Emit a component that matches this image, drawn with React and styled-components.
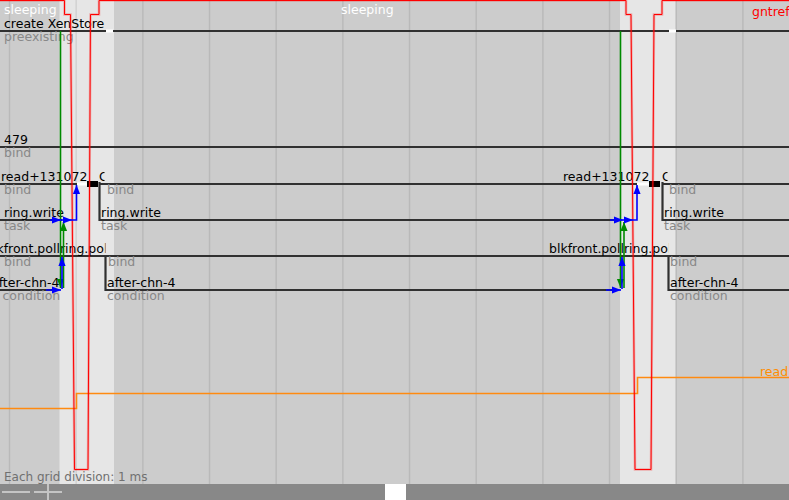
import React from 'react';
import styled, { createGlobalStyle } from 'styled-components';

const GlobalStyle = createGlobalStyle`
  html, body {
    margin: 0;
    padding: 0;
    background: #cccccc;
  }
  body {
    font-family: 'DejaVu Sans', Verdana, sans-serif;
    overflow: hidden;
  }
`;

const WIDTH = 789;
const CANVAS_H = 484;

// highlighted time ranges (light bands)
const bands = [
  [59.5, 114],
  [620, 675.5],
];

// one grid division = 1 ms
const gridLines = Array.from({ length: 12 }, (_, i) => 9.5 + i * 66.67);

const threads = [
  { y: 31, segs: [[0, 789]] },
  { y: 147, segs: [[0, 789]] },
  { y: 184, segs: [[0, 77], [100, 637], [662, 789]] },
  { y: 220, segs: [[0, 62], [99, 614], [662, 789]] },
  { y: 256, segs: [[0, 789]] },
  { y: 290, segs: [[0, 52], [105, 612], [668, 789]] },
];

const highlights = [
  { x1: 106, x2: 113, y: 31 },
  { x1: 669, x2: 676, y: 31 },
  { x1: 77, x2: 87, y: 184 },
  { x1: 637, x2: 649, y: 184 },
];

const blocks = [
  { x: 87, y: 181, w: 11 },
  { x: 649, y: 181, w: 11 },
];

const joins = [
  { x: 99.5, y1: 182, y2: 221 },
  { x: 105.5, y1: 255, y2: 291 },
  { x: 662.5, y1: 182, y2: 221 },
  { x: 668.5, y1: 255, y2: 291 },
];

const labels = [
  { x: 4, y: 14, text: 'sleeping', tone: 'white' },
  { x: 341, y: 14, text: 'sleeping', tone: 'white' },
  { x: 752, y: 16, text: 'gntref', tone: 'red' },
  { x: 4, y: 28, text: 'create XenStore' },
  { x: 4, y: 41, text: 'preexisting', tone: 'kind' },
  { x: 4, y: 144, text: '479' },
  { x: 4, y: 157, text: 'bind', tone: 'kind' },
  { x: 1, y: 181, text: 'read+131072' },
  { x: 99, y: 181, text: 'C', clip: 'cutL' },
  { x: 4, y: 194, text: 'bind', tone: 'kind' },
  { x: 107, y: 194, text: 'bind', tone: 'kind' },
  { x: 4, y: 217, text: 'ring.write' },
  { x: 4, y: 230, text: 'task', tone: 'kind' },
  { x: 101, y: 217, text: 'ring.write' },
  { x: 101, y: 230, text: 'task', tone: 'kind' },
  { x: -15, y: 253, text: 'blkfront.pollring.pol', clip: 'pollL' },
  { x: 4, y: 266, text: 'bind', tone: 'kind' },
  { x: 108, y: 266, text: 'bind', tone: 'kind' },
  { x: -9, y: 287, text: 'after-chn-4' },
  { x: 2.5, y: 300, text: 'condition', tone: 'kind' },
  { x: 107, y: 287, text: 'after-chn-4' },
  { x: 107, y: 300, text: 'condition', tone: 'kind' },
  { x: 563, y: 181, text: 'read+131072' },
  { x: 662, y: 181, text: 'C', clip: 'cutR' },
  { x: 669, y: 194, text: 'bind', tone: 'kind' },
  { x: 664, y: 217, text: 'ring.write' },
  { x: 664, y: 230, text: 'task', tone: 'kind' },
  { x: 549, y: 253, text: 'blkfront.pollring.pol', clip: 'pollR' },
  { x: 670, y: 266, text: 'bind', tone: 'kind' },
  { x: 670, y: 287, text: 'after-chn-4' },
  { x: 670, y: 300, text: 'condition', tone: 'kind' },
  { x: 760, y: 376, text: 'read', tone: 'orange' },
];

// label clipping windows (labels end where the thread ends)
const clips = {
  cutL: [99, 104.5],
  cutR: [662, 667.5],
  pollL: [-20, 105.5],
  pollR: [540, 668.5],
};

const GREEN = '#008a00';
const BLUE = '#0000ff';

const arrows = [
  { c: GREEN, pts: [[60.5, 31], [60.5, 288]] },
  { c: GREEN, pts: [[63.5, 288], [63.5, 222]] },
  { c: BLUE, pts: [[50, 220], [61, 220]] },
  { c: BLUE, pts: [[61, 220], [72, 220]] },
  { c: BLUE, pts: [[72, 220], [76.5, 220], [76.5, 185]] },
  { c: BLUE, pts: [[62, 289], [62, 257]] },
  { c: BLUE, pts: [[46, 290], [61, 290]] },

  { c: GREEN, pts: [[620.5, 31], [620.5, 288]] },
  { c: GREEN, pts: [[624, 288], [624, 222]] },
  { c: BLUE, pts: [[610, 220], [623, 220]] },
  { c: BLUE, pts: [[623, 220], [633, 220]] },
  { c: BLUE, pts: [[633, 220], [637, 220], [637, 185]] },
  { c: BLUE, pts: [[622, 289], [622, 257]] },
  { c: BLUE, pts: [[606, 290], [621, 290]] },
];

const gntref =
  'M0,0.5 H64.5 V14.5 H70.5 L74.5,469.5 H88 L90.5,14.5 H99 V0.5 ' +
  'H626 V14.5 H631 L635,469.5 H651 L654,14.5 H662 V0.5 H789';

const readCounter = 'M0,408.5 H76.5 V393.5 H637.5 V377.5 H789';

const toneColors = {
  name: '#000000',
  kind: '#888888',
  white: '#ffffff',
  red: '#ff0000',
  orange: '#ff8c00',
  note: '#707070',
};

function headPoints([x1, y1], [x2, y2]) {
  const len = 9;
  const half = 3.6;
  const dx = x2 - x1;
  const dy = y2 - y1;
  const d = Math.hypot(dx, dy) || 1;
  const ux = dx / d;
  const uy = dy / d;
  const bx = x2 - ux * len;
  const by = y2 - uy * len;
  return [
    [x2, y2],
    [bx - uy * half, by + ux * half],
    [bx + uy * half, by - ux * half],
  ]
    .map((p) => p.join(','))
    .join(' ');
}

function Arrow({ pts, c }) {
  const last = pts[pts.length - 1];
  const prev = pts[pts.length - 2];
  return (
    <g>
      <ArrowLine points={pts.map((p) => p.join(',')).join(' ')} stroke={c} />
      <polygon points={headPoints(prev, last)} fill={c} />
    </g>
  );
}

export default function App() {
  return (
    <>
      <GlobalStyle />
      <Viewer>
        <Canvas>
          <Chart width={WIDTH} height={CANVAS_H} viewBox={`0 0 ${WIDTH} ${CANVAS_H}`}>
            <defs>
              {Object.entries(clips).map(([id, [a, b]]) => (
                <clipPath key={id} id={id}>
                  <rect x={a} y={0} width={b - a} height={CANVAS_H} />
                </clipPath>
              ))}
            </defs>

            {bands.map(([a, b]) => (
              <rect key={a} x={a} y={0} width={b - a} height={CANVAS_H} fill="#e6e6e6" />
            ))}
            {gridLines.map((x) => (
              <GridLine key={x} x1={x} x2={x} y1={0} y2={CANVAS_H} />
            ))}

            {threads.map((t) =>
              t.segs.map(([a, b]) => (
                <ThreadLine key={`${t.y}-${a}`} x1={a} x2={b} y1={t.y} y2={t.y} />
              ))
            )}
            {joins.map((j) => (
              <ThreadLine key={j.x} x1={j.x} x2={j.x} y1={j.y1} y2={j.y2} />
            ))}
            {highlights.map((h) => (
              <rect key={h.x1} x={h.x1} y={h.y - 1.5} width={h.x2 - h.x1} height={3} fill="#ffffff" />
            ))}
            {blocks.map((b) => (
              <rect key={b.x} x={b.x} y={b.y} width={b.w} height={6} fill="#000000" />
            ))}

            {labels.map((l, i) => (
              <Label
                key={i}
                x={l.x}
                y={l.y}
                $tone={l.tone || 'name'}
                clipPath={l.clip ? `url(#${l.clip})` : undefined}
              >
                {l.text}
              </Label>
            ))}

            <CounterPath d={readCounter} stroke="#ff8a10" $width={1.6} />
            <CounterHalo d={gntref} />
            <CounterPath d={gntref} stroke="#ff0000" $width={1} />

            {arrows.map((a, i) => (
              <Arrow key={i} {...a} />
            ))}

            <Label x={4} y={481} $tone="note" $size={12}>
              Each grid division: 1 ms
            </Label>
          </Chart>
        </Canvas>
        <ScrollBar>
          <ZoomButton $width={28} $left={2} />
          <ZoomButton $width={28} $left={4} $plus />
          <Thumb $offset={323} />
        </ScrollBar>
      </Viewer>
    </>
  );
}

const Viewer = styled.div`
  width: ${WIDTH}px;
  height: 500px;
  display: flex;
  flex-direction: column;
  overflow: hidden;
`;

const Canvas = styled.div`
  position: relative;
  height: ${CANVAS_H}px;
  background: #cccccc;
  overflow: hidden;
`;

const Chart = styled.svg`
  display: block;
  overflow: hidden;
`;

const GridLine = styled.line`
  stroke: rgba(0, 0, 0, 0.09);
  stroke-width: 1.5;
`;

const ThreadLine = styled.line`
  stroke: #303030;
  stroke-width: 2.2;
`;

const Label = styled.text`
  font-family: 'DejaVu Sans', Verdana, sans-serif;
  font-size: ${(p) => p.$size || 12.5}px;
  fill: ${(p) => toneColors[p.$tone]};
`;

const ArrowLine = styled.polyline`
  fill: none;
  stroke-width: 1.6;
`;

const CounterPath = styled.path`
  fill: none;
  stroke-width: ${(p) => p.$width};
`;

const CounterHalo = styled.path`
  fill: none;
  stroke: rgba(255, 0, 0, 0.25);
  stroke-width: 2.6;
`;

const ScrollBar = styled.div`
  height: 16px;
  background: #888888;
  display: flex;
  align-items: stretch;
`;

const ZoomButton = styled.div`
  position: relative;
  width: ${(p) => p.$width}px;
  margin-left: ${(p) => p.$left}px;

  &::before {
    content: '';
    position: absolute;
    left: 0;
    right: 0;
    top: 7px;
    height: 2px;
    background: #c4c4c4;
  }

  ${(p) =>
    p.$plus &&
    `
    &::after {
      content: '';
      position: absolute;
      left: 13px;
      top: 0;
      bottom: 0;
      width: 2px;
      background: #c4c4c4;
    }
  `}
`;

const Thumb = styled.div`
  margin-left: ${(p) => p.$offset}px;
  width: 21px;
  background: #ffffff;
`;
